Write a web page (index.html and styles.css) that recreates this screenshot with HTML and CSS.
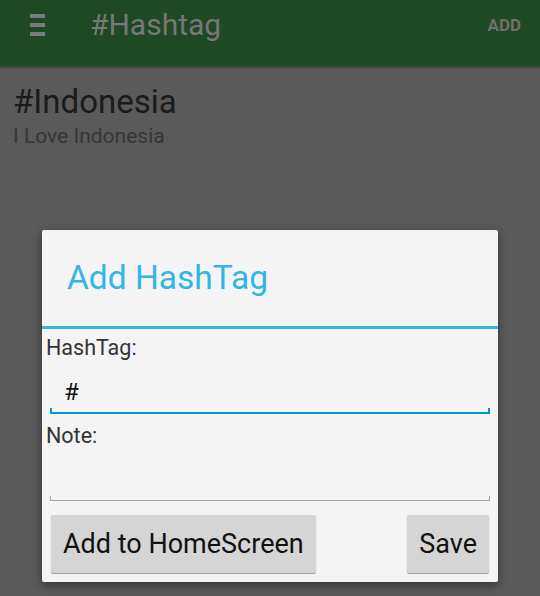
FILE: index.html
```html
<!DOCTYPE html>
<html>
<head>
<meta charset="utf-8">
<title>#Hashtag</title>
<link rel="stylesheet" href="styles.css">
</head>
<body>
<div class="screen">
  <!-- action bar -->
  <div class="actionbar">
    <div class="menu-icon"><span></span><span></span><span></span></div>
    <div class="app-title">#Hashtag</div>
    <div class="action-add">ADD</div>
  </div>

  <!-- list under the dialog -->
  <div class="item">
    <div class="item-tag">#Indonesia</div>
    <div class="item-note">I Love Indonesia</div>
  </div>

  <!-- Add HashTag dialog -->
  <div class="dialog">
    <div class="dlg-title">Add HashTag</div>
    <div class="dlg-divider"></div>
    <div class="dlg-label first">HashTag:</div>
    <div class="field active">#</div>
    <div class="dlg-label">Note:</div>
    <div class="field note"></div>
    <div class="dlg-buttons">
      <div class="btn">Add to HomeScreen</div>
      <div class="btn">Save</div>
    </div>
  </div>
</div>
</body>
</html>
```

FILE: styles.css
```css
body {
    margin: 0;
    background-color: #5a5a5a;
    font-family: Roboto, "Open Sans", sans-serif;
}

.screen {
    position: relative;
    width: 540px;
    height: 596px;
    overflow: hidden;
    background-color: #5a5a5a;
}

.actionbar {
    height: 50px;
    padding-bottom: 16px;
    background-color: #1e4922;
    box-shadow: 0 2px 1px rgba(0, 0, 0, 0.25);
    display: flex;
    align-items: center;
}

.menu-icon {
    width: 15px;
    margin-left: 30px;
    display: flex;
    flex-direction: column;
    gap: 5px;
}

.menu-icon span {
    display: block;
    height: 4px;
    background-color: #7b7b7b;
}

.app-title {
    margin-left: 45px;
    font-size: 30px;
    line-height: 36px;
    color: #777777;
    flex: 1;
}

.action-add {
    margin-right: 19px;
    font-size: 17px;
    font-weight: bold;
    color: #6f6f6f;
}

.item {
    padding: 16px 13px 0;
}

.item-tag {
    font-size: 33px;
    line-height: 40px;
    color: #1b1b1b;
}

.item-note {
    margin-top: 2px;
    font-size: 21px;
    line-height: 25px;
    color: #363636;
}

.dialog {
    position: absolute;
    top: 230px;
    left: 42px;
    width: 456px;
    padding-bottom: 9px;
    background-color: #f4f4f4;
    border-radius: 2px;
    box-shadow: 0 3px 10px rgba(0, 0, 0, 0.45);
}

.dlg-title {
    height: 96px;
    padding-left: 25px;
    font-size: 33.5px;
    line-height: 96px;
    color: #33b5e5;
}

.dlg-divider {
    height: 3px;
    background-color: #33b5e5;
}

.dlg-label {
    margin-top: 9px;
    padding-left: 4px;
    font-size: 21.5px;
    line-height: 25px;
    color: #333333;
}

.dlg-label.first {
    margin-top: 6px;
}

.field {
    margin: 0 8px;
    padding: 17px 14px 5px;
    height: 30px;
    font-size: 24px;
    line-height: 30px;
    color: #111111;
    border-bottom: 2px solid #0099cc;
    background:
        linear-gradient(#0099cc, #0099cc) left bottom / 2px 4px no-repeat,
        linear-gradient(#0099cc, #0099cc) right bottom / 2px 4px no-repeat;
}

.field.note {
    height: 30px;
    padding-top: 17px;
    padding-bottom: 5px;
    border-bottom: 1px solid #a9a9a9;
    background:
        linear-gradient(#a9a9a9, #a9a9a9) left bottom / 1px 4px no-repeat,
        linear-gradient(#a9a9a9, #a9a9a9) right bottom / 1px 4px no-repeat;
}

.dlg-buttons {
    margin: 14px 9px 0 9px;
    display: flex;
    justify-content: space-between;
}

.btn {
    height: 58px;
    padding: 0 12px;
    font-size: 27px;
    line-height: 58px;
    color: #111111;
    background-color: #d5d5d5;
    border-radius: 2px;
    box-shadow: 0 1px 1px rgba(0, 0, 0, 0.35);
}
```
